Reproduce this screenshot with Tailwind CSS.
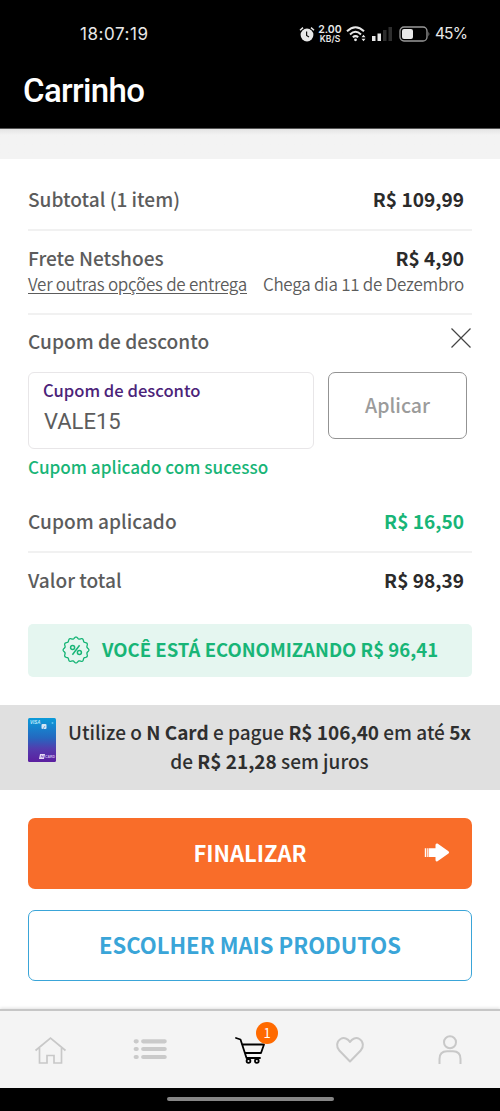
<!DOCTYPE html>
<html lang="pt-BR">
<head>
<meta charset="utf-8">
<title>Carrinho</title>
<script src="https://cdn.jsdelivr.net/npm/@tailwindcss/browser@4"></script>
</head>
<body class="bg-white">
<div class="flex h-[1111px] w-[500px] flex-col overflow-hidden bg-white font-['Noto_Sans_CJK_SC',sans-serif] text-[19.1px] leading-[28px] text-[#5c5c5c] whitespace-nowrap">
  <header class="flex h-[129px] shrink-0 flex-col border-b border-[#555] bg-black text-white">
    <div class="mt-[20px] flex h-[28px] items-center pl-[80px] pr-[34px] font-[Inter,sans-serif] text-[#e8e8e8]">
      <span class="text-[17px] tracking-[0.55px]">18:07:19</span>
      <div class="ml-auto flex items-center">
        <svg class="h-[16px] w-[16px]" viewBox="0 0 16 16"><circle cx="8" cy="9" r="6.4" fill="#e8e8e8"/><path d="M1 4.2 4 1.6M15 4.2 12 1.6" stroke="#e8e8e8" stroke-width="1.5"/><path d="M7.6 5.4V9.4L10 10.9" stroke="#111" stroke-width="1.2" fill="none"/></svg>
        <div class="ml-[3px] flex w-[24px] flex-col items-center text-[10.5px] font-semibold leading-[10px]"><span>2.00</span><span class="text-[8.5px] leading-[9px]">KB/S</span></div>
        <svg class="ml-[4px] h-[18px] w-[21px]" viewBox="0 0 21 18" fill="none" stroke="#e8e8e8" stroke-width="2"><path d="M1 6.2Q9.500-1.800 18 6.200M4 9.400Q9.500 4.200 15 9.400M6.800 12.300Q9.500 10 12.200 12.300"/><circle cx="9.500" cy="14.800" r="1.400" fill="#e8e8e8" stroke="none"/><path d="M15.500 12.200 17.500 9.800 19.500 12.200ZM15.500 13.800 17.500 16.200 19.500 13.800Z" fill="#e8e8e8" stroke="none"/></svg>
        <svg class="ml-[4px] h-[16px] w-[22px]" viewBox="0 0 22 16"><path fill="#e8e8e8" d="M1 10h3.500v5H1zM6.500 7.500H10V15H6.500z"/><path fill="#2e2e2e" d="M12 4h3.500v11H12zM17.500 1H21v14h-3.500z"/></svg>
        <svg class="ml-[6px] h-[16px] w-[32px]" viewBox="0 0 32 16"><rect x="1" y="1" width="27" height="14" rx="4" fill="none" stroke="#999" stroke-width="1.300"/><rect x="3" y="3" width="11" height="10" rx="2" fill="#e8e8e8"/><path d="M29.500 5.500Q31.300 8 29.500 10.500Z" fill="#999"/></svg>
        <span class="ml-[4px] w-[31px] text-[15.5px] tracking-[-0.9px]">45%</span>
      </div>
    </div>
    <h1 class="mt-[23px] pl-[23px] font-[Roboto,sans-serif] text-[33px] font-medium leading-[40px] tracking-[-0.65px]">Carrinho</h1>
  </header>
  <div class="h-[30px] shrink-0 bg-linear-to-b from-[#e4e4e4] from-0% via-[#f3f3f3] via-20% to-[#f3f3f3]"></div>

  <main class="flex flex-col px-[28px] font-medium">
    <div class="flex h-[70px] items-center justify-between pt-[10px] pr-[8px]"><span>Subtotal (1 item)</span><b class="text-[#2b2b2b]">R$ 109,99</b></div>
    <div class="h-[84px] border-t-2 border-[#f1f1f1] pt-[13px] pr-[8px]">
      <div class="flex justify-between"><span>Frete Netshoes</span><b class="text-[#2b2b2b]">R$ 4,90</b></div>
      <div class="flex justify-between text-[17px] font-[350] leading-[24px] tracking-[-0.27px]"><a class="underline underline-offset-2">Ver outras opções de entrega</a><span>Chega dia 11 de Dezembro</span></div>
    </div>
    <div class="flex h-[59px] justify-between border-t-2 border-[#f1f1f1] pt-[12px]"><span>Cupom de desconto</span>
      <svg class="h-[22px] w-[22px]" viewBox="0 0 22 22" stroke="#444" stroke-width="1.200"><path d="M1.500 1.500 20.500 20.500M20.500 1.500 1.500 20.500"/></svg></div>
    <div class="flex h-[77px] items-start gap-[14px]">
      <div class="flex h-[77px] w-[286px] flex-col rounded-[6px] border border-[#e8e6e8] pl-[14px]">
        <span class="mt-[3px] text-[16.6px] text-[#4b2379]">Cupom de desconto</span>
        <span class="mt-[2px] pl-[1px] font-[Roboto,sans-serif] text-[22px] font-normal leading-[32px]">VALE15</span>
      </div>
      <div class="flex h-[67px] w-[139px] items-center justify-center rounded-[7px] border-[1.500px] border-[#939393] pb-[2px] text-[19.5px] text-[#9b9b9b]">Aplicar</div>
    </div>
    <div class="mt-[4px] h-[28px] text-[17.15px] text-[#18b577]">Cupom aplicado com sucesso</div>
    <div class="flex h-[70px] items-center justify-between pt-[10px] pr-[8px]"><span>Cupom aplicado</span><b class="text-[#18b577]">R$ 16,50</b></div>
    <div class="flex h-[73px] items-start justify-between border-t-2 border-[#f1f1f1] pt-[13px] pr-[8px]"><span>Valor total</span><b class="text-[#2b2b2b]">R$ 98,39</b></div>
    <div class="flex h-[53px] items-center rounded-[5px] bg-[#e5f6f0] pl-[34px] font-bold text-[#18b577]">
      <svg class="mb-px mr-[12px] h-[28px] w-[28px]" viewBox="-14 -14 28 28" fill="none" stroke="#18b577" stroke-width="1.300"><path id="seal"/><circle cx="-3.400" cy="-2.400" r="2" stroke-width="1.500"/><circle cx="3.400" cy="2.400" r="2" stroke-width="1.500"/><path d="M3.600-4.800-3.600 4.800" stroke-width="1.500"/></svg>
      <span class="pb-[3px] text-[18.55px]">VOCÊ ESTÁ ECONOMIZANDO R$ 96,41</span>
    </div>
  </main>
  <section class="mt-[28px] flex h-[85px] shrink-0 bg-[#e0e0e0] pl-[28px] pt-[13px] font-medium text-[#2f2f2f]">
    <svg class="h-[44px] w-[28px]" viewBox="0 0 28 44"><defs><linearGradient id="card" x1="0" y1="0" x2="0" y2="1"><stop offset="0" stop-color="#0b9bd9"/><stop offset=".45" stop-color="#2468c0"/><stop offset=".7" stop-color="#533cae"/><stop offset="1" stop-color="#5c1fa0"/></linearGradient></defs><rect width="28" height="44" rx="1.500" fill="url(#card)"/><text x="2" y="5.800" font-family="Liberation Sans" font-size="4.500" font-weight="bold" font-style="italic" fill="#bfe8fb">VISA</text><rect x="13.500" y="6" width="5" height="5" rx="1" fill="#d5e6f5"/><path d="M15 11 17 8" stroke="#6aa8dd"/><circle cx="24.500" cy="5" r="1" fill="#5cc2ee"/><path d="M12 36h5l-1 5h-5z" fill="#e6dcf5"/><path d="M13 39.500l.6-2 1.200 2 .6-2" stroke="#5a2aa6" stroke-width=".6" fill="none"/><text x="17" y="40" font-family="Liberation Sans" font-size="3.500" font-weight="bold" fill="#cdb9ec">CARD</text></svg>
    <div class="-mt-px ml-[12px] flex w-[403px] flex-col items-center text-[19px] leading-[29px]"><span>Utilize o <b>N Card</b> e pague <b>R$ 106,40</b> em até <b>5x</b></span><span>de <b>R$ 21,28</b> sem juros</span></div>
  </section>
  <div class="mt-[28px] flex flex-col gap-[21px] px-[28px] font-bold">
    <div class="relative flex h-[71px] items-center justify-center rounded-[7px] bg-[#f96d29] pb-[3px] text-[22px] text-white"><span>FINALIZAR</span>
      <svg class="absolute right-[22px] top-[25px] h-[20px] w-[26px]" viewBox="0 0 26 20" fill="#fff"><path d="M.8 5.300h1.500v8.700H.8zM3 5.300h.8v8.700H3zM4.500 5.300H11.500V2Q11.500 0 13.500.5L24.500 8.200Q25.800 9.400 24.500 10.600L13.500 18.300Q11.500 19 11.500 17V14H4.500z"/></svg></div>
    <div class="flex h-[71px] items-center justify-center rounded-[7px] border-[1.500px] border-[#3aa5d8] pb-[3px] text-[22px] text-[#3aa5d8]">ESCOLHER MAIS PRODUTOS</div>
  </div>
  <nav class="mt-auto grid h-[79px] shrink-0 grid-cols-5 border-t-2 border-[#c6c6c6] bg-[#f4f4f4] shadow-[0_-1px_3px_rgba(0,0,0,0.12)]">
    <svg class="h-[77px] w-[100px]" viewBox="0 1011 100 77" fill="none" stroke="#c8c8c8" stroke-width="1.700"><path d="M35.500 1050.500 50.500 1038 65.500 1050.500M39.500 1048V1063H47V1055.500H54V1063H61.500V1048"/></svg>
    <svg class="h-[77px] w-[100px]" viewBox="100 1011 100 77" stroke="#cacaca" stroke-width="4.200" stroke-linecap="round"><path d="M135.700 1041.300h1M143.200 1041.300h21.500M135.700 1049h1M143.200 1049h21.500M135.700 1057h1M143.200 1057h21.500"/></svg>
    <div class="relative"><svg class="h-[77px] w-[100px]" viewBox="200 1011 100 77" fill="none" stroke="#000" stroke-width="1.800" stroke-linecap="round" stroke-linejoin="round"><path d="M236 1038 240.500 1039.500 246.500 1058H260M242 1044.500H264L261 1053H245"/><circle cx="248.500" cy="1061" r="1.900"/><circle cx="256.800" cy="1061" r="1.900"/></svg>
      <span class="absolute left-[56px] top-[11px] flex size-[22px] items-center justify-center rounded-full bg-[#ff6a00] pb-px text-[13px] font-normal leading-[22px] text-white">1</span></div>
    <svg class="h-[77px] w-[100px]" viewBox="300 1011 100 77" fill="none" stroke="#c8c8c8" stroke-width="2" stroke-linejoin="round"><path d="M350 1061.500 339.300 1050.500C336 1047 336.500 1041.500 340.500 1039C344 1037 348 1038.500 350 1042C352 1038.500 356 1037 359.500 1039C363.500 1041.500 364 1047 360.700 1050.500Z"/></svg>
    <svg class="h-[77px] w-[100px]" viewBox="400 1011 100 77" fill="none" stroke="#c8c8c8" stroke-width="2"><circle cx="450" cy="1042.300" r="6"/><path d="M439.500 1064V1059Q439.500 1051.300 447 1051.300H453Q460.500 1051.300 460.500 1059V1064"/></svg>
  </nav>
  <footer class="flex h-[23px] shrink-0 justify-center bg-black pt-[9px]"><div class="h-[4px] w-[167px] rounded-full bg-[#868686]"></div></footer>
</div>
<script>
// Scalloped outline of the discount seal: twelve lobes around a circle.
let d = '';
for (let i = 0; i <= 144; i++) {
  const a = i / 144 * 2 * Math.PI, r = 12.1 + 0.8 * Math.cos(12 * a);
  d += (i ? 'L' : 'M') + (r * Math.sin(a)).toFixed(2) + ' ' + (-r * Math.cos(a)).toFixed(2);
}
document.getElementById('seal').setAttribute('d', d + 'Z');
</script>
</body>
</html>
